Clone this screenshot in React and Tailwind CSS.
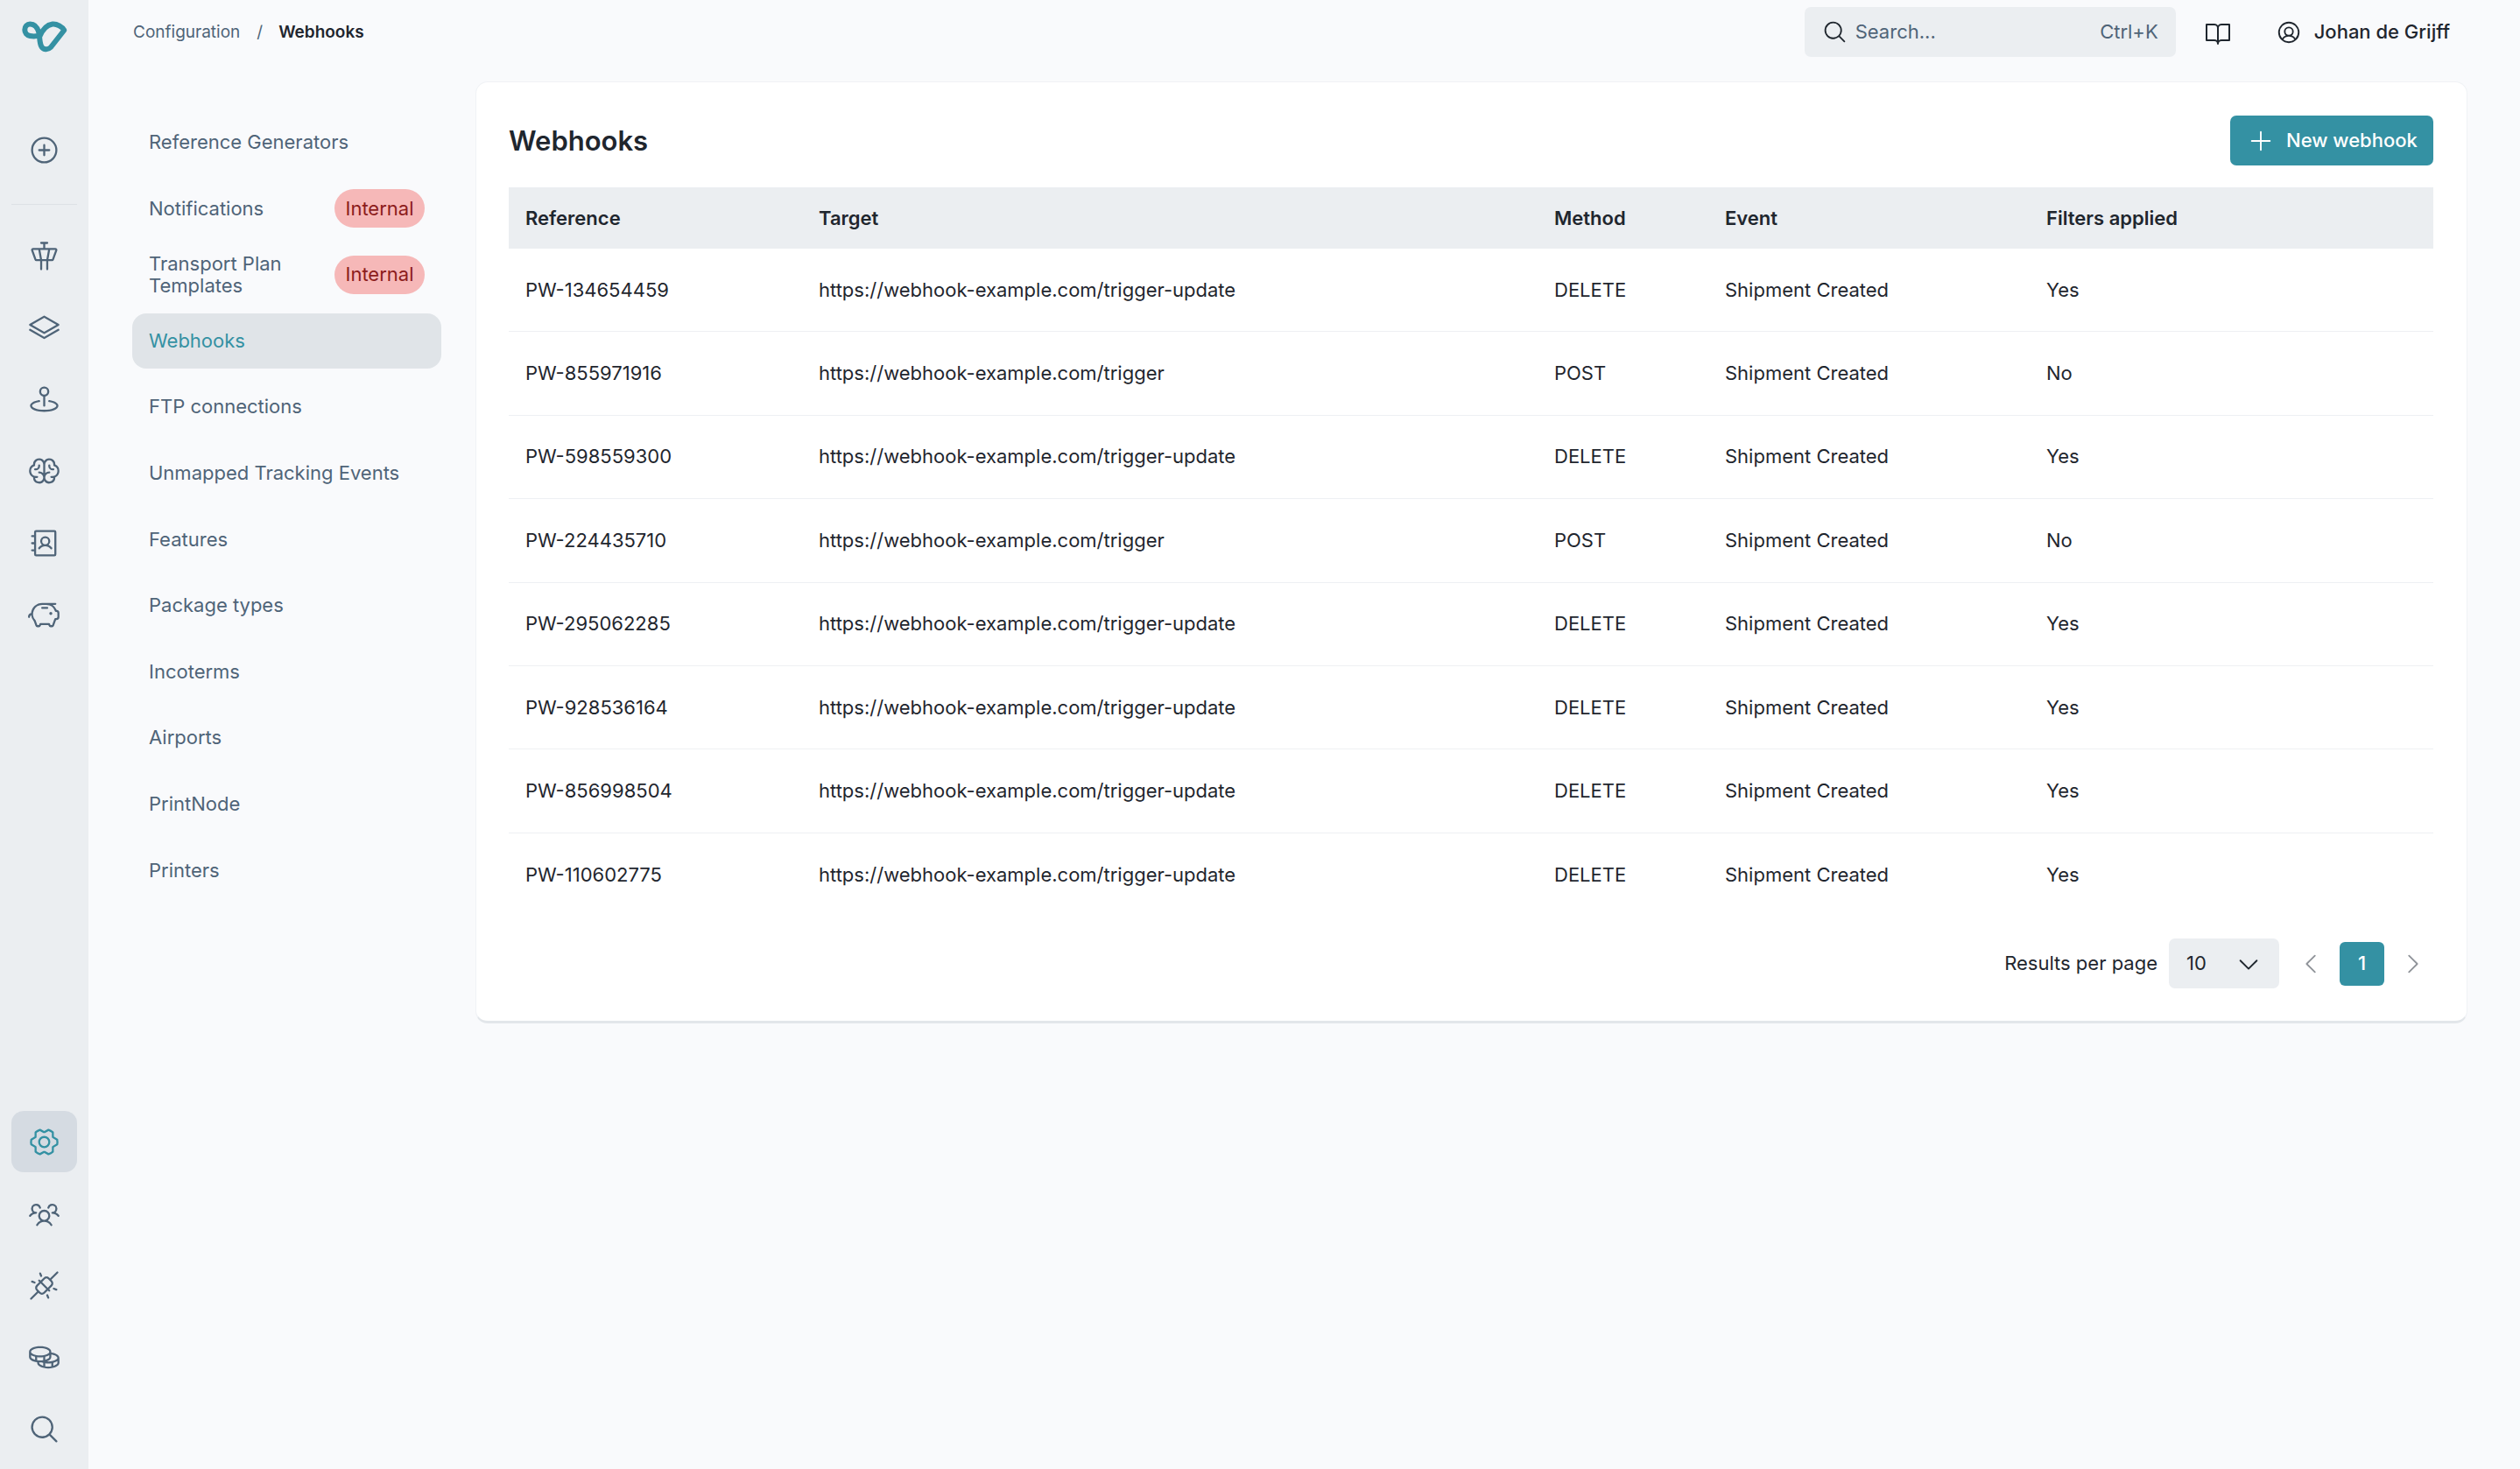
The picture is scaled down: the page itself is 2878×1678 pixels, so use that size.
import React from "react";
import {
  PiPlusCircle, PiAirTrafficControl, PiStackSimple, PiMapPinSimpleArea, PiBrain, PiAddressBook, PiPiggyBank,
  PiGearSix, PiUsersThree, PiPlugsConnected, PiCoins, PiMagnifyingGlass, PiBookOpen, PiUserCircle, PiPlus,
  PiCaretDown, PiCaretLeft, PiCaretRight,
} from "react-icons/pi";

const topIcons = [PiAirTrafficControl, PiStackSimple, PiMapPinSimpleArea, PiBrain, PiAddressBook, PiPiggyBank];
const bottomIcons = [PiUsersThree, PiPlugsConnected, PiCoins, PiMagnifyingGlass];

const navItems = [
  { label: "Reference Generators" },
  { label: "Notifications", internal: true },
  { label: "Transport Plan Templates", internal: true },
  { label: "Webhooks", active: true },
  { label: "FTP connections" },
  { label: "Unmapped Tracking Events" },
  { label: "Features" },
  { label: "Package types" },
  { label: "Incoterms" },
  { label: "Airports" },
  { label: "PrintNode" },
  { label: "Printers" },
];

const UPDATE = "https://webhook-example.com/trigger-update";
const TRIGGER = "https://webhook-example.com/trigger";

const rows = [
  ["PW-134654459", UPDATE, "DELETE", "Yes"],
  ["PW-855971916", TRIGGER, "POST", "No"],
  ["PW-598559300", UPDATE, "DELETE", "Yes"],
  ["PW-224435710", TRIGGER, "POST", "No"],
  ["PW-295062285", UPDATE, "DELETE", "Yes"],
  ["PW-928536164", UPDATE, "DELETE", "Yes"],
  ["PW-856998504", UPDATE, "DELETE", "Yes"],
  ["PW-110602775", UPDATE, "DELETE", "Yes"],
];

const Logo = () => (
  <svg width="70" height="60" viewBox="15 10 70 60" fill="none" className="mt-[10px] shrink-0">
    <path
      d="M43.5 40.5C39 42 36 41.5 33.3 41C29.5 40.3 27.3 37.5 27.3 34C27.3 30.2 30 27.5 33.3 27.5C38.5 27.5 41.8 31.5 43.3 37C44.5 42 44 48 46 52.5C48 57 53.5 57.5 57 54L72.3 34.5C70 30.5 64 27 59 27.5C52 28.5 47 35 44.3 41.7"
      stroke="#3491a3"
      strokeWidth="6"
      strokeLinecap="round"
      strokeLinejoin="round"
    />
  </svg>
);

const Sidebar = () => (
  <aside className="w-[101px] h-[1678px] shrink-0 bg-[#ebeef1] flex flex-col items-center text-[#4f6478]">
    <Logo />
    <div className="mt-[66px] w-[75px] h-[70px] flex items-center justify-center">
      <PiPlusCircle size={37} />
    </div>
    <div className="mt-[27px] w-[75px] h-px bg-[#dde1e6]" />
    <div className="mt-[23px] flex flex-col gap-[12px]">
      {topIcons.map((Icon, i) => (
        <div key={i} className="w-[75px] h-[70px] flex items-center justify-center">
          <Icon size={37} />
        </div>
      ))}
    </div>
    <div className="mt-auto mb-[11px] flex flex-col gap-[12px]">
      <div className="w-[75px] h-[70px] rounded-[14px] bg-[#d5dbe2] flex items-center justify-center text-[#3491a3]">
        <PiGearSix size={37} />
      </div>
      {bottomIcons.map((Icon, i) => (
        <div key={i} className="w-[75px] h-[70px] flex items-center justify-center">
          <Icon size={37} />
        </div>
      ))}
    </div>
  </aside>
);

const Header = () => (
  <header className="h-[73px] pl-[51px] pr-[80px] flex items-center">
    <div className="mt-[2px] flex items-center text-[19px]">
      <span className="text-[#4f6478]">Configuration</span>
      <span className="ml-[19px] text-[#4f6478]">/</span>
      <span className="ml-[18px] font-semibold text-[#1f262e]">Webhooks</span>
    </div>
    <div className="ml-auto w-[424px] h-[57px] rounded-[7px] bg-[#ebeef1] flex items-center pl-[20px] pr-[20px]">
      <PiMagnifyingGlass size={29} className="text-[#1f262e]" />
      <span className="ml-[9px] text-[22px] text-[#4f6478]">Search...</span>
      <span className="ml-auto text-[22px] text-[#4f6478]">Ctrl+K</span>
    </div>
    <PiBookOpen size={32} className="ml-[32px] text-[#1f262e]" />
    <PiUserCircle size={30} className="ml-[50px] text-[#1f262e]" />
    <span className="ml-[14px] text-[22px] font-medium text-[#1f262e] whitespace-nowrap">Johan de Grijff</span>
  </header>
);

const Nav = () => (
  <nav className="w-[353px] shrink-0 pt-[38px] flex flex-col gap-[12.6px]">
    {navItems.map((item) => (
      <div
        key={item.label}
        className={`h-[63px] rounded-[16px] pl-[19px] pr-[19px] flex items-center justify-between text-[22px] leading-[25px] ${
          item.active ? "bg-[#e0e4e8] text-[#3491a3]" : "text-[#4f6478]"
        }`}
      >
        <span className={item.internal ? "w-[190px]" : ""}>{item.label}</span>
        {item.internal && (
          <span className="w-[103px] h-[44px] rounded-full bg-[#f6b8b8] text-[#8c1c1c] flex items-center justify-center">
            Internal
          </span>
        )}
      </div>
    ))}
  </nav>
);

const Table = () => (
  <div className="text-[22px] text-[#1f262e]">
    <div className="h-[70px] bg-[#ebeef1] grid grid-cols-[335px_840px_195px_367px_1fr] items-center font-semibold">
      <div className="pl-[19px]">Reference</div>
      <div className="pl-[19px]">Target</div>
      <div className="pl-[19px]">Method</div>
      <div className="pl-[19px]">Event</div>
      <div className="pl-[19px]">Filters applied</div>
    </div>
    {rows.map((row, i) => (
      <div
        key={row[0]}
        className={`h-[95.4px] grid grid-cols-[335px_840px_195px_367px_1fr] items-center ${
          i < rows.length - 1 ? "border-b border-[#eef0f3]" : ""
        }`}
      >
        <div className="pl-[19px]">{row[0]}</div>
        <div className="pl-[19px]">{row[1]}</div>
        <div className="pl-[19px]">{row[2]}</div>
        <div className="pl-[19px]">Shipment Created</div>
        <div className="pl-[19px]">{row[3]}</div>
      </div>
    ))}
  </div>
);

const Pagination = () => (
  <div className="mt-[25px] flex items-center justify-end pr-[6px] text-[22px] text-[#1f262e]">
    <span>Results per page</span>
    <div className="ml-[13px] w-[126px] h-[57px] rounded-[7px] bg-[#ebeef1] flex items-center justify-between pl-[20px] pr-[20px]">
      <span>10</span>
      <PiCaretDown size={30} />
    </div>
    <div className="ml-[19px] w-[36px] h-[50px] flex items-center justify-center text-[#8f9399]">
      <PiCaretLeft size={30} />
    </div>
    <div className="ml-[14px] w-[51px] h-[50px] rounded-[6px] bg-[#3491a3] text-white font-medium flex items-center justify-center">
      1
    </div>
    <div className="ml-[14px] w-[36px] h-[50px] flex items-center justify-center text-[#8f9399]">
      <PiCaretRight size={30} />
    </div>
  </div>
);

export default function App() {
  return (
    <div className="w-[2878px] h-[1678px] flex bg-[#f9fafc] overflow-hidden font-['Inter',sans-serif]">
      <Sidebar />
      <main className="flex-1 min-w-0">
        <Header />
        <div className="mt-[20px] pl-[50px] pr-[60px] flex gap-[39px] items-start">
          <Nav />
          <section className="flex-1 min-w-0 bg-white rounded-[14px] border border-[#f0f2f5] border-b-[3px] border-b-[#e2e6ea] pt-[38px] pl-[37px] pr-[38px] pb-[37px]">
            <div className="flex items-center justify-between mb-[25px]">
              <h1 className="mt-[2px] text-[31px] font-semibold text-[#1f262e]">Webhooks</h1>
              <button className="w-[232px] h-[57px] rounded-[7px] bg-[#3491a3] text-white text-[22px] font-medium flex items-center pl-[20px]">
                <PiPlus size={30} />
                <span className="ml-[14px]">New webhook</span>
              </button>
            </div>
            <Table />
            <Pagination />
          </section>
        </div>
      </main>
    </div>
  );
}
